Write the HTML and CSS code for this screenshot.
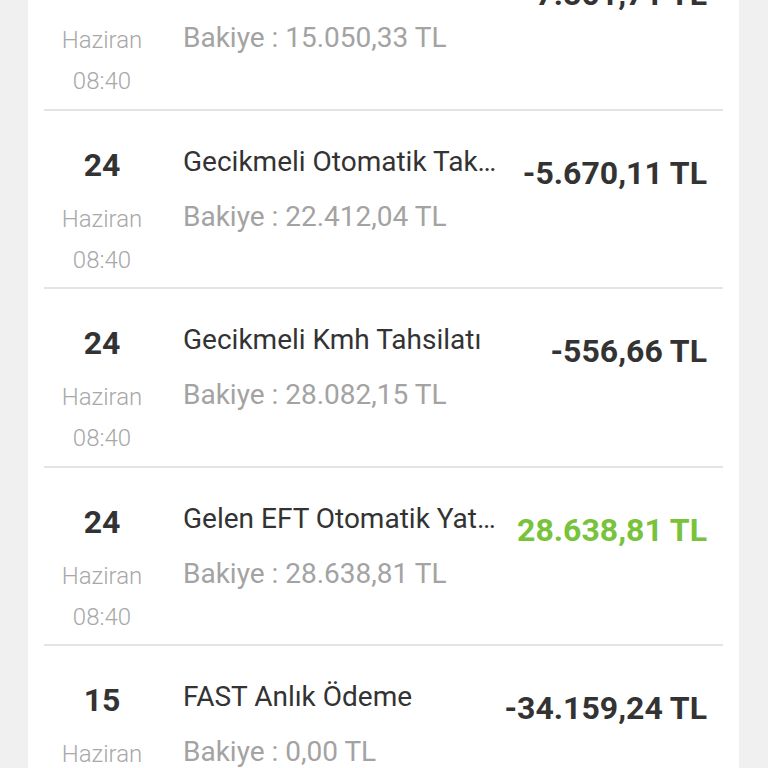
FILE: index.html
```html
<!DOCTYPE html>
<html lang="tr">
<head>
<meta charset="utf-8">
<title>Hesap Hareketleri</title>
<link rel="stylesheet" href="styles.css">
</head>
<body>
<div class="card">
  <div class="row">
    <div class="date"><div class="day">24</div><div class="month">Haziran</div><div class="time">08:40</div></div>
    <div class="info"><div class="title">Gecikmeli Otomatik Taksit Tahsilatı</div><div class="balance">Bakiye : 15.050,33 TL</div></div>
    <div class="amount">-7.801,71 TL</div>
  </div>
  <div class="row">
    <div class="date"><div class="day">24</div><div class="month">Haziran</div><div class="time">08:40</div></div>
    <div class="info"><div class="title">Gecikmeli Otomatik Taksit Tahsilatı</div><div class="balance">Bakiye : 22.412,04 TL</div></div>
    <div class="amount">-5.670,11 TL</div>
  </div>
  <div class="row">
    <div class="date"><div class="day">24</div><div class="month">Haziran</div><div class="time">08:40</div></div>
    <div class="info"><div class="title">Gecikmeli Kmh Tahsilatı</div><div class="balance">Bakiye : 28.082,15 TL</div></div>
    <div class="amount">-556,66 TL</div>
  </div>
  <div class="row">
    <div class="date"><div class="day">24</div><div class="month">Haziran</div><div class="time">08:40</div></div>
    <div class="info"><div class="title">Gelen EFT Otomatik Yatırım</div><div class="balance">Bakiye : 28.638,81 TL</div></div>
    <div class="amount positive">28.638,81 TL</div>
  </div>
  <div class="row">
    <div class="date"><div class="day">15</div><div class="month">Haziran</div><div class="time">08:40</div></div>
    <div class="info"><div class="title">FAST Anlık Ödeme</div><div class="balance">Bakiye : 0,00 TL</div></div>
    <div class="amount">-34.159,24 TL</div>
  </div>
</div>
</body>
</html>
```

FILE: styles.css
```css
html, body {
  margin: 0;
  padding: 0;
  background: #f0f0f0;
  height: 768px;
  overflow: hidden;
}

body {
  font-family: Roboto, "Noto Sans", "Liberation Sans", sans-serif;
  color: #333333;
}

.card {
  background: #ffffff;
  width: 711px;
  margin-left: 28px;
  margin-top: -68px;
  padding: 0 16px;
  box-sizing: border-box;
}

.row {
  display: flex;
  align-items: flex-start;
  height: 178.5px;
  box-sizing: border-box;
  border-bottom: 2px solid #e4e4e4;
}

.date {
  width: 116px;
  flex: none;
  text-align: center;
  padding-top: 32px;
}

.day {
  font-size: 32px;
  font-weight: 700;
  line-height: 44px;
  color: #333333;
}

.month,
.time {
  font-size: 24px;
  font-weight: 300;
  line-height: 41px;
  color: #a8a8a8;
}

.month {
  margin-top: 12px;
}

.info {
  flex: 1;
  min-width: 0;
  padding-left: 23px;
  padding-top: 33px;
}

.title {
  font-size: 28px;
  line-height: 36px;
  color: #333333;
  white-space: nowrap;
  overflow: hidden;
  text-overflow: ellipsis;
}

.balance {
  font-size: 28px;
  line-height: 36px;
  color: #a3a3a3;
  margin-top: 19px;
  white-space: nowrap;
}

.amount {
  flex: none;
  padding-top: 40px;
  padding-left: 19px;
  padding-right: 16px;
  font-size: 32px;
  font-weight: 700;
  line-height: 44px;
  color: #333333;
  white-space: nowrap;
}

.amount.positive {
  color: #78c23c;
}
```
